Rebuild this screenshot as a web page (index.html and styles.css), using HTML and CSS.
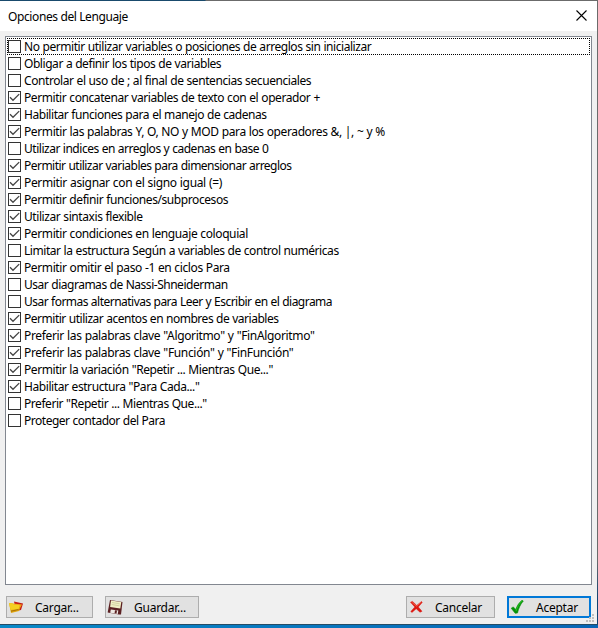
FILE: index.html
```html
<!DOCTYPE html>
<html lang="es">
<head>
<meta charset="utf-8">
<title>Opciones del Lenguaje</title>
<link rel="stylesheet" href="styles.css">
</head>
<body>
<svg class="defs" width="0" height="0"><symbol id="tick" viewBox="0 0 13 13"><path d="M2 6.3 5 9.3 11.2 3.1" fill="none" stroke="#444" stroke-width="1.3"/></symbol></svg>
<div class="desktop">
<main class="dialog">
<header class="titlebar"><h1>Opciones del Lenguaje</h1>
<svg class="close" width="11" height="11" viewBox="0 0 11 11"><path d="M.5.5 10.5 10.5M10.5.5.5 10.5" stroke="#000" stroke-width="1.1"/></svg></header>
<ul class="options">
<li class="focused t22"><i class="box"></i><span>No permitir utilizar variables o posiciones de arreglos sin inicializar</span></li>
<li class="t22"><i class="box"></i><span>Obligar a definir los tipos de variables</span></li>
<li class="t20"><i class="box"></i><span>Controlar el uso de ; al final de sentencias secuenciales</span></li>
<li class="t20"><i class="box"><svg><use href="#tick"/></svg></i><span>Permitir concatenar variables de texto con el operador +</span></li>
<li class="t22"><i class="box"><svg><use href="#tick"/></svg></i><span>Habilitar funciones para el manejo de cadenas</span></li>
<li class="t16"><i class="box"><svg><use href="#tick"/></svg></i><span>Permitir las palabras Y, O, NO y MOD para los operadores &amp;, |, ~ y %</span></li>
<li class="t26"><i class="box"></i><span>Utilizar indices en arreglos y cadenas en base 0</span></li>
<li class="t29"><i class="box"><svg><use href="#tick"/></svg></i><span>Permitir utilizar variables para dimensionar arreglos</span></li>
<li class="t12"><i class="box"><svg><use href="#tick"/></svg></i><span>Permitir asignar con el signo igual (=)</span></li>
<li class="t20"><i class="box"><svg><use href="#tick"/></svg></i><span>Permitir definir funciones/subprocesos</span></li>
<li class="t20"><i class="box"><svg><use href="#tick"/></svg></i><span>Utilizar sintaxis flexible</span></li>
<li class="t16"><i class="box"><svg><use href="#tick"/></svg></i><span>Permitir condiciones en lenguaje coloquial</span></li>
<li class="t22"><i class="box"></i><span>Limitar la estructura Según a variables de control numéricas</span></li>
<li class="t16"><i class="box"><svg><use href="#tick"/></svg></i><span>Permitir omitir el paso -1 en ciclos Para</span></li>
<li class="t26"><i class="box"></i><span>Usar diagramas de Nassi-Shneiderman</span></li>
<li class="t29"><i class="box"></i><span>Usar formas alternativas para Leer y Escribir en el diagrama</span></li>
<li class="t26"><i class="box"><svg><use href="#tick"/></svg></i><span>Permitir utilizar acentos en nombres de variables</span></li>
<li class="t12"><i class="box"><svg><use href="#tick"/></svg></i><span>Preferir las palabras clave "Algoritmo" y "FinAlgoritmo"</span></li>
<li class="t12"><i class="box"><svg><use href="#tick"/></svg></i><span>Preferir las palabras clave "Función" y "FinFunción"</span></li>
<li class="t20"><i class="box"><svg><use href="#tick"/></svg></i><span>Permitir la variación "Repetir ... Mientras Que..."</span></li>
<li class="t20"><i class="box"><svg><use href="#tick"/></svg></i><span>Habilitar estructura "Para Cada..."</span></li>
<li class="t22"><i class="box"></i><span>Preferir "Repetir ... Mientras Que..."</span></li>
<li class="t26"><i class="box"></i><span>Proteger contador del Para</span></li>
</ul>
<footer class="actions">
<button class="load"><svg width="16" height="16" viewBox="0 0 16 16"><path d="M6 2.5 15 4.5 13 11 8 12Z" fill="#c51d16"/><path d="M5 4.5 14 5.5 11 11Z" fill="#f3a51e"/><path d="M1 4 5 4.5 6 5.5 12.5 6 11 12 3 14Z" fill="#dfa40b"/><path d="M1 4 5 4.5 6 5.5 12 6.2 10.5 10 2.5 11Z" fill="#f5cf20"/><path d="M3 12.2 10.5 10.5" stroke="#a87008" fill="none"/></svg><span>Cargar...</span></button>
<button class="save"><svg width="16" height="16" viewBox="0 0 16 16"><path d="M3 1 15.5 3 14 15.5 12 15.5.7 13.5Z" fill="#5b2022"/><path d="M4 1.5 14.3 3 13.3 9.5 3.1 8Z" fill="#f1efc5"/><path d="M5 3.5 12.7 4.8M4.7 5.5 12.4 6.8" stroke="#c9c995" stroke-width=".7"/><path d="M3.8 10.6 11.3 11.6 10.8 15 3.2 13.8Z" fill="#eee9e4"/><path d="M8 11.2 10 11.5 9.5 14.5 7.6 14.2Z" fill="#5b2022"/></svg><span>Guardar...</span></button>
<button class="cancel"><svg width="16" height="16" viewBox="0 0 16 16"><path d="M1.5 3.2 3.5 2.4 7.7 6.4 12.5 2.5 13.2 3.4 9.3 8 13 12.3 11 13.2 7.2 9.7 3 13.4 1.8 12.5 5.8 8Z" fill="#dc1710" stroke="#dc1710" stroke-width=".5"/><path d="M2.5 3 7.5 7.2 12.3 3.1" stroke="#f26a51" stroke-width=".8" fill="none"/></svg><span>Cancelar</span></button>
<button class="accept"><svg width="16" height="16" viewBox="0 0 16 16"><path d="M1.2 9.2 3.3 7.9 5.8 10.5C7 7 9 3.5 12 1.3L13.3 2C10.2 5.5 8.5 9.8 7.5 14L5.2 14.3Z" fill="#079009" stroke="#079009" stroke-width=".6"/><path d="M6 12C7.5 8 9 4.5 12.2 2" stroke="#25c51f" stroke-width="1" fill="none"/></svg><span>Aceptar</span></button>
</footer>
<svg class="grip" width="8" height="8"><path d="M6 0h2v2h-2zM3 3h2v2h-2zM6 3h2v2h-2zM0 6h2v2h-2zM3 6h2v2h-2zM6 6h2v2h-2z" fill="#bfbfbf"/></svg>
</main>
</div>
</body>
</html>
```

FILE: styles.css
```css
* { box-sizing: border-box; }
body { margin: 0; font: 12px/17px "Noto Sans", "Open Sans", sans-serif; color: #000; }
.defs { position: absolute; }
.desktop { height: 628px; padding: 1px 1px 4px 0; background: linear-gradient(90deg, #194a6c 0 205px, #6b6b6b 206px) top / 100% 1px no-repeat, linear-gradient(#244c66, #244c66) 0 624px / 100% 1px no-repeat, linear-gradient(90deg, #0788c7, #0765b5) 0 625px / 100% 3px no-repeat, linear-gradient(#6b6b6b 0 560px, #104272 600px); }
.dialog { position: relative; height: 623px; background: #f0f0f0; display: flex; flex-direction: column; }
.titlebar { height: 30px; background: #fff; padding: 0 10px 2px 8px; display: flex; justify-content: space-between; align-items: center; }
h1 { margin: 2px 0 0; font-size: 12px; font-weight: 400; letter-spacing: -.39px; }
.options { list-style: none; margin: 5px 5px 0; padding: 1px 1px 0; height: 549px; width: 587px; border: 1px solid #828790; background: #fff; }
.options li { height: 17px; padding-left: 1px; display: flex; align-items: center; gap: 3px; white-space: nowrap; word-spacing: .3px; }
/* Tracking steps, loosest to tightest */
.t12 { letter-spacing: -.34px; }
.t16 { letter-spacing: -.39px; }
.t20 { letter-spacing: -.42px; }
.t22 { letter-spacing: -.44px; }
.t26 { letter-spacing: -.48px; }
.t29 { letter-spacing: -.52px; }
.options .focused { background: repeating-linear-gradient(90deg, #000 0 1px, transparent 1px 2px) top / 100% 1px no-repeat, repeating-linear-gradient(90deg, #000 0 1px, transparent 1px 2px) bottom / 100% 1px no-repeat, repeating-linear-gradient(#000 0 1px, transparent 1px 2px) left / 1px 100% no-repeat, repeating-linear-gradient(#000 0 1px, transparent 1px 2px) right / 1px 100% no-repeat; }
.box { width: 13px; height: 13px; flex: none; border: 1px solid #333; background: #fff; }
.box svg { display: block; width: 13px; height: 13px; margin: -1px; }
.actions { display: flex; margin-top: 11px; padding: 0 6px; }
button { height: 22px; border: 1px solid #adadad; background: #e1e1e1; font: inherit; color: #000; padding: 0 0 0 1px; display: flex; align-items: center; letter-spacing: -.25px; }
button svg { flex: none; }
button span { margin-left: 11px; }
.load { width: 87px; }
.save { width: 94px; margin-left: 12px; }
.cancel { width: 89px; margin-left: auto; margin-right: 12px; padding-left: 2px; }
.cancel span { margin-left: 10px; }
.accept { width: 84px; border: 2px solid #0078d7; }
.accept span { margin-left: 10px; }
.grip { position: absolute; right: 3px; bottom: 2px; }
```
